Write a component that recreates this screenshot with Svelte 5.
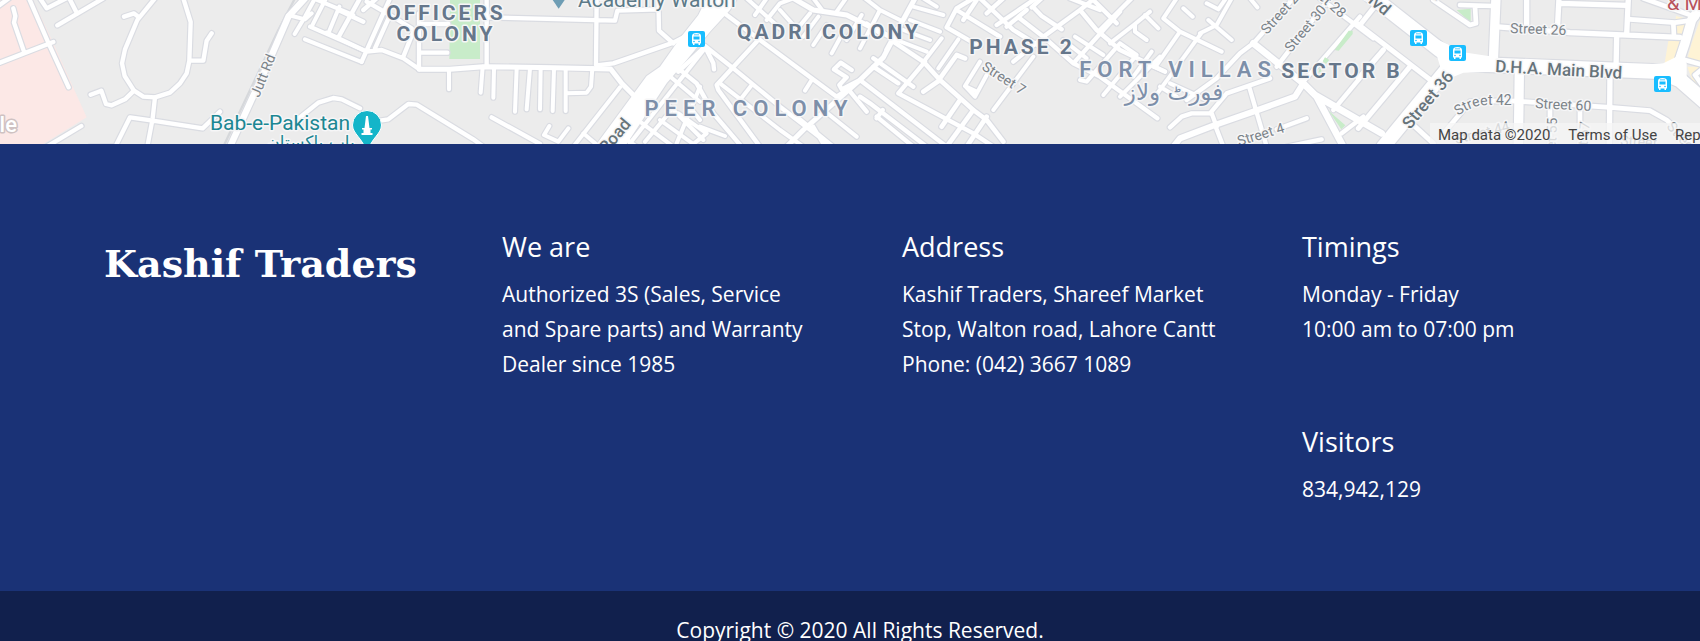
<script>
  // The map is drawn in five tiles, each 340 units wide; roads use a 3x grid inside a tile.
  const TILE = 1020;

  const roads = [
    // tile, width, path
    [0, 13, 'M85 -10L148 135L206 262M0 188L160 126M40 25L46 48L42 68L72 155M-5 18L28 -6M172 76L310 -5M120 -5L140 25L205 -8M208 -5L230 38'],
    [0, 13, 'M465 -5L412 60L375 148L366 190L374 228L402 272L430 290L465 292L510 278L540 250L560 220L568 182L572 66L550 -5M372 50L402 40L412 48M568 182L610 182L620 122L635 100'],
    [0, 13, 'M402 272L375 298L335 316L318 312L304 272L272 284M465 292L458 355L442 440M345 440L270 440M350 432L390 352L458 362L608 385L660 335M140 440L244 378'],
    [0, 19, 'M915 -5L865 50L800 200L690 440'],
    [0, 12, 'M865 45L915 58L935 40M945 -5L915 50L884 102M930 80L1090 150M978 -5L935 80M940 -5L1060 45M1018 20L985 100M915 118L1085 186'],
    [0, 13, 'M890 360L955 308L1000 294L1025 298L1080 325M1140 362L1165 358L1225 312L1250 314L1420 418L1450 440'],
    [1, 13, 'M65 185L150 -5M-40 98L80 155L125 150L190 175L238 208M-5 112L60 -5M-5 30L70 65M105 145L150 45M80 5L150 45L215 85M190 170L222 90M237 208L237 40M237 158L322 158M237 72L325 72M70 30L110 -5'],
    [1, 15, 'M238 208L330 208L430 200L640 203L812 207L845 250L880 285'],
    [1, 12, 'M327 208L327 268M428 200L422 278M462 205L460 293M530 205L525 335M570 205L560 328M602 205L600 328M642 205L638 333M677 205L677 333M757 205L753 260L740 278L677 280'],
    [1, 13, 'M440 -5L440 200M440 52L825 62L832 32L955 28M770 -5L768 195M955 -5L957 92L1000 130M770 196L820 190L1000 128L1030 112M455 352L600 432'],
    [1, 12, 'M628 378L612 405L655 425L685 385M700 440L840 262M730 400L775 438M870 430L1095 145M985 225L1080 305M880 350L1000 440M960 360L1060 432M915 425L990 335M820 390L890 440'],
    [2, 13, 'M120 30L200 90L260 135L470 290L500 270M230 125L110 255L115 270L240 440M-5 205L50 250L100 340L185 440M-5 215L75 140L100 190L102 208M75 138L160 205L300 320L450 435'],
    [2, 12, 'M120 250L300 390L370 440M215 255L180 300M395 240L375 272M-30 320L70 420M-5 340L80 400L30 440M-10 430L60 260M60 380L135 408M20 310L60 360'],
    [2, 12, 'M200 -5L300 85M260 60L300 10L340 -5M225 45L260 -5M300 30L340 75M345 95L390 40M370 110L415 50M400 135L440 75'],
    [2, 15, 'M335 -8L400 30L500 45L560 75L640 115M620 150L705 -5M640 115L610 172L540 240L370 390L320 440'],
    [2, 12, 'M455 160L485 105M540 145L600 30L555 -5M500 120L545 45M400 -5L430 35M470 35L500 -8M600 30L660 60M600 100L560 70M690 60L780 95M700 20L790 45M670 90L750 120M650 120L740 155M730 -5L770 20'],
    [2, 13, 'M540 240L485 268L478 255L500 232L462 208L482 188L515 210M580 200L655 250M655 280L735 185M655 280L880 400L940 440M540 240L670 340L800 440M500 262L560 335M540 290L570 310L740 440M590 350L700 440M590 355L608 330M580 175L700 260'],
    [2, 14, 'M640 125L730 185L780 240L880 330L920 360L970 425M780 240L730 275M780 235L830 165L855 175M880 330L800 440M840 300L785 380M920 350L860 440'],
    [2, 12, 'M775 205L835 118M735 180L785 115M900 185L855 258L885 290L920 225M940 330L1060 170M855 258L890 275M450 440L385 380M400 380L430 432M350 350L460 440M430 330L530 410'],
    [2, 13, 'M880 -5L830 25L800 82L900 140M830 30L960 110M950 75L1090 -20M900 -5L1000 90L1080 140M920 40L970 -5M850 60L890 0M980 80L1040 30M1000 185L1080 120'],
    [3, 13, 'M-5 52L70 110L160 190L240 230L412 355M35 22L65 -5M40 22L65 48L125 88M70 110L180 30L230 -10M150 -5L240 30M180 30L230 90L300 150L435 215M215 -5L290 70M240 90L335 -5M160 190L300 35'],
    [3, 12, 'M270 130L345 72L390 35M345 72L345 95L380 120M375 45L415 85M180 240L200 245L300 130M250 285L350 165L300 130M130 120L200 175M165 110L250 165M395 155L340 230M300 290L420 170'],
    [3, 12, 'M470 -5L430 55L480 95L605 155M410 195L480 95M490 25L518 50M540 100L560 90L590 75L635 -5M565 60L635 120M690 -5L712 22M560 10L595 28L618 -5M400 200L435 215M405 290L545 98M420 260L470 290M560 300L450 250'],
    [3, 13, 'M570 340L620 280L750 235M700 130L660 160L590 235L500 300M700 130L820 -5M770 200L930 -8M585 375L610 440M575 340L515 340L485 350L450 382M575 340L590 380M688 262L740 440M770 388L860 355M800 440L905 418'],
    [3, 18, 'M850 250L825 290L700 335L585 375L480 415L460 440'],
    [3, 20, 'M700 130L850 250L890 290L970 440M885 285L1085 400'],
    [3, 13, 'M850 245L1020 50M900 -5L1060 115M940 330L1090 150M965 400L1030 350'],
    [4, 15, 'M-10 70L240 262M-5 385L150 200M70 150L-5 235M0 75L60 0M160 375L220 430'],
    [4, 28, 'M408 -10L400 185M478 215L475 440'],
    [4, 16, 'M405 80L630 98L960 112M500 -5L500 80M597 -5L592 90M600 10L800 16M805 -5L800 105M770 110L768 205M750 220L748 440'],
    [4, 14, 'M440 302L490 305L750 322L870 332L920 360L990 425M255 395L330 305L440 302M810 58L945 68L1000 60M850 -5L1010 52M940 70L942 110M220 0L330 75L348 70L345 20M300 15L400 18M570 320L570 440M660 330L660 440M975 180L1030 195M1030 205L1005 225L1030 260'],
    [4, 28, 'M955 190L975 130L995 60L1030 10'],
    [4, 42, 'M275 190L70 440'],
    [4, 44, 'M10 -30L240 150L330 192L700 207L900 215L960 240L1040 310']
  ];

  const buses = [
    [688, 31],
    [1410, 30],
    [1449, 45],
    [1654, 76]
  ];

  const districts = [
    { t: 'OFFICERS', x: 446, y: 20, s: 21, k: 3 },
    { t: 'COLONY', x: 446, y: 41, s: 21, k: 3 },
    { t: 'QADRI COLONY', x: 829, y: 39, s: 21, k: 3 },
    { t: 'PHASE 2', x: 1022, y: 54, s: 21, k: 3 },
    { t: 'SECTOR B', x: 1342, y: 78, s: 21, k: 3 },
    { t: 'PEER COLONY', x: 749, y: 116, s: 22, k: 6, light: true },
    { t: 'FORT VILLAS', x: 1178, y: 77, s: 22, k: 6, light: true }
  ];

  const streets = [
    { t: 'Jutt Rd', x: 259, y: 98, r: -68 },
    { t: 'Street 7', x: 981, y: 69, r: 33 },
    { t: 'Street 4', x: 1239, y: 146, r: -17 },
    { t: 'Street 29', x: 1267, y: 35, r: -48 },
    { t: 'Street 30', x: 1291, y: 53, r: -50 },
    { t: 'Street 28', x: 1299, y: -19, r: 42 },
    { t: 'Street 26', x: 1510, y: 33, r: 2 },
    { t: 'Street 60', x: 1535, y: 108, r: 3 },
    { t: 'Street 44', x: 1456, y: 144, r: -14 },
    { t: 'Street 55', x: 1555, y: 174, r: -88 },
    { t: 'Street 67', x: 1584, y: 178, r: -84 },
    { t: 'Street 38', x: 1399, y: -40, r: 48 },
    { t: 'Street', x: 1620, y: 145, r: 4 },
    { t: 'Street 61', x: 1666, y: 127, r: 48 }
  ];

  const avenues = [
    { t: 'Walton Road', x: 570, y: 198, r: -50 },
    { t: 'Street 36', x: 1410, y: 130, r: -50 },
    { t: 'D.H.A. Main Blvd', x: 1495, y: 72, r: 3 },
    { t: 'Main Blvd', x: 1327, y: -32, r: 40 }
  ];

  const about = ['Authorized 3S (Sales, Service', 'and Spare parts) and Warranty', 'Dealer since 1985'];
  const address = ['Kashif Traders, Shareef Market', 'Stop, Walton road, Lahore Cantt', 'Phone: (042) 3667 1089'];
  const timings = ['Monday - Friday', '10:00 am to 07:00 pm'];
</script>

{#snippet block(title, lines)}
  <section>
    <h2>{title}</h2>
    <p>
      {#each lines as line, i}{#if i}<br />{/if}{line}{/each}
    </p>
  </section>
{/snippet}

<div class="map">
  <svg viewBox="0 0 1700 144" preserveAspectRatio="xMidYMid slice" role="img" aria-label="Map of Walton, Lahore">
    <rect width="1700" height="144" fill="#ececec" />
    <g transform="scale(.33333333)">
      <path fill="#fce8e6" d="M0 0H100L160 130L260 352L130 432H0Z" />
      <path fill="#c8ecc9" d="M1350 0H1440V177H1348Z" />
      <path fill="#c8ecc9" d="M3090 0H3115L3100 12Z M4370 30L4412 26V68Z" />
      <path fill="#fef3d5" d="M5005 122H5055L5040 182L4993 195ZM5028 48L5065 58L5052 108L5022 100ZM5075 130L5100 60V182L5062 176ZM5062 200H5100V270L5080 250Z" />
      <path class="rail" d="M885 -5L835 90L670 440" />
      <path class="avenue" d="M1790 432L1940 228L1980 200L2040 115L2095 45L2120 -5H2212L2190 30L2130 95L2060 180L2000 250L1880 432Z" />
      {#each roads as [tile, width, d]}
        <path class="casing" transform="translate({tile * TILE})" stroke-width={width + 7} {d} />
      {/each}
      {#each roads as [tile, width, d]}
        <path class="road" transform="translate({tile * TILE})" stroke-width={width} {d} />
      {/each}
      <path fill="#fff" d="M1790 432L1940 228L1980 200L2040 115L2095 45L2120 -5H2212L2190 30L2130 95L2060 180L2000 250L1880 432Z" />
      <path fill="#fff" d="M4270 100L4400 158L4480 170V215L4390 218L4350 235L4310 260L4290 240L4322 205L4310 165ZM4910 195L4990 190L5040 165L5060 190L5060 255L4990 240Z" />
      <path fill="#c8ecc9" d="M4004 150L4046 92H4058V102L4016 152ZM3975 172L3988 180L3978 192L3968 184ZM3960 200L3965 215L3955 218ZM3986 332L4036 376L4024 388Z" />
      <path fill="#6e9db4" d="M1658 0H1694L1676 26Z" />
    </g>

    <g class="labels">
      {#each streets as l}
        <text class="street" transform="translate({l.x} {l.y}) rotate({l.r})">{l.t}</text>
      {/each}
      <path id="curve42" fill="none" d="M1458 116Q1474 104 1490 105L1530 105" />
      <text class="street"><textPath href="#curve42">Street 42</textPath></text>
      {#each avenues as l}
        <text class="main" transform="translate({l.x} {l.y}) rotate({l.r})">{l.t}</text>
      {/each}
      {#each districts as l}
        <text class="district" class:light={l.light} x={l.x} y={l.y} font-size={l.s} letter-spacing={l.k} text-anchor="middle">{l.t}</text>
      {/each}
      <text class="urdu" x="1174" y="100" text-anchor="middle">فورٹ ولاز</text>
      <text class="place" x="578" y="7">Academy Walton</text>
      <text class="poi" x="210" y="130">Bab-e-Pakistan</text>
      <text class="poi small" x="311" y="148" text-anchor="middle">باب پاکستان</text>
      <text class="shop" x="1667" y="10">&amp; Medical</text>
      <text class="college" x="17" y="132" text-anchor="end">Circle</text>
    </g>

    {#each buses as [x, y]}
      <g transform="translate({x} {y})">
        <rect width="17" height="16" rx="2" fill="#19bdff" />
        <path fill="#fff" d="M4 5Q4 2 8.500 2T13 5V12.500H12V14H10.500V12.500H6.500V14H5V12.500H4Z" />
        <path fill="#19bdff" d="M5.500 5.500H11.500V8.500H5.500ZM6 3.500H11V4.300H6Z" />
        <circle cx="6" cy="10.500" r=".8" fill="#19bdff" />
        <circle cx="11" cy="10.500" r=".8" fill="#19bdff" />
      </g>
    {/each}

    <g transform="translate(367 125)">
      <path fill="#14b5c9" stroke="#fff" stroke-width="1" d="M0 -14.500A14.500 14.500 0 0 1 14.500 0C14.500 9 4 13 0 28C-4 13 -14.500 9 -14.500 0A14.500 14.500 0 0 1 0 -14.500Z" />
      <path fill="#fff" d="M-1 -9H1L2.500 3H5V4.500H3.500V8H5.500V10H-5.500V8H-3.500V4.500H-5V3H-2.500Z" />
    </g>
  </svg>

  <div class="credits">
    <span>Map data ©2020</span>
    <a href="#terms">Terms of Use</a>
    <a href="#report">Report a map error</a>
  </div>
</div>

<footer>
  <div class="columns">
    <a class="brand" href="#home">Kashif Traders</a>
    {@render block('We are', about)}
    {@render block('Address', address)}
    <div class="stack">
      {@render block('Timings', timings)}
      {@render block('Visitors', ['834,942,129'])}
    </div>
  </div>
  <div class="copyright">Copyright © 2020 All Rights Reserved.</div>
</footer>

<style>
  :global(body) {
    background: #11204d;
    overflow: hidden;
  }

  .map {
    position: relative;
    height: 144px;
    overflow: hidden;
    background: #ececec;
    font-family: Roboto, sans-serif;
  }

  .map svg {
    display: block;
    width: 100%;
    height: 100%;
  }

  .casing,
  .road,
  .rail {
    fill: none;
    stroke-linecap: round;
    stroke-linejoin: round;
  }

  .casing {
    stroke: #dadce2;
  }

  .road {
    stroke: #fff;
  }

  .rail {
    stroke: #d6d8db;
    stroke-width: 7;
  }

  .avenue {
    fill: #fff;
    stroke: #dadce2;
    stroke-width: 6;
  }

  .labels text {
    paint-order: stroke;
    stroke: #f6f6f7;
    stroke-width: 3px;
    stroke-linejoin: round;
  }

  .street {
    font-size: 14px;
    fill: #7b8389;
  }

  .main {
    font-size: 17px;
    font-weight: 500;
    fill: #66737a;
  }

  .district {
    font-weight: 700;
    fill: #66778b;
  }

  .light {
    font-weight: 600;
    fill: #7d8fa9;
  }

  .urdu {
    font-family: "DejaVu Sans", sans-serif;
    font-size: 23px;
    fill: #7d8fa9;
  }

  .place {
    font-size: 21px;
    fill: #5c7a88;
  }

  .poi {
    font-size: 21px;
    fill: #1c8793;
  }

  .small {
    font-family: "DejaVu Sans", sans-serif;
    font-size: 17px;
  }

  .shop {
    font-size: 20px;
    fill: #b8525b;
  }

  .labels .college {
    font-size: 22px;
    font-weight: 500;
    fill: #fff;
    stroke: #cfc2c2;
  }

  .credits {
    position: absolute;
    right: 0;
    bottom: 0;
    display: flex;
    gap: 18px;
    box-sizing: border-box;
    width: 270px;
    padding: 3px 0 0 8px;
    overflow: hidden;
    white-space: nowrap;
    font-size: 15px;
    line-height: 18px;
    color: #444;
    background: rgba(245, 245, 245, 0.75);
  }

  .credits a {
    color: inherit;
    text-decoration: none;
  }

  footer {
    font-family: "Open Sans", sans-serif;
    font-size: 21px;
    font-weight: 500;
    line-height: 35px;
    color: #fff;
    background: #1a3276;
  }

  .columns {
    display: grid;
    grid-template-columns: repeat(4, 1fr);
    padding: 83px 0 84px 102px;
    margin-right: -2px;
  }

  .brand {
    padding: 14px 0 0 2px;
    font-family: "DejaVu Serif", serif;
    font-size: 38px;
    font-weight: 700;
    line-height: 46px;
    color: #fff;
    text-decoration: none;
    white-space: nowrap;
  }

  .stack {
    display: grid;
    gap: 75px;
  }

  h2 {
    margin: 0 0 10px;
    font-size: 27px;
    font-weight: 400;
    line-height: 40px;
  }

  p {
    margin: 0;
    white-space: nowrap;
  }

  .copyright {
    padding: 22px 0 21px 20px;
    text-align: center;
    background: #11204d;
  }
</style>
